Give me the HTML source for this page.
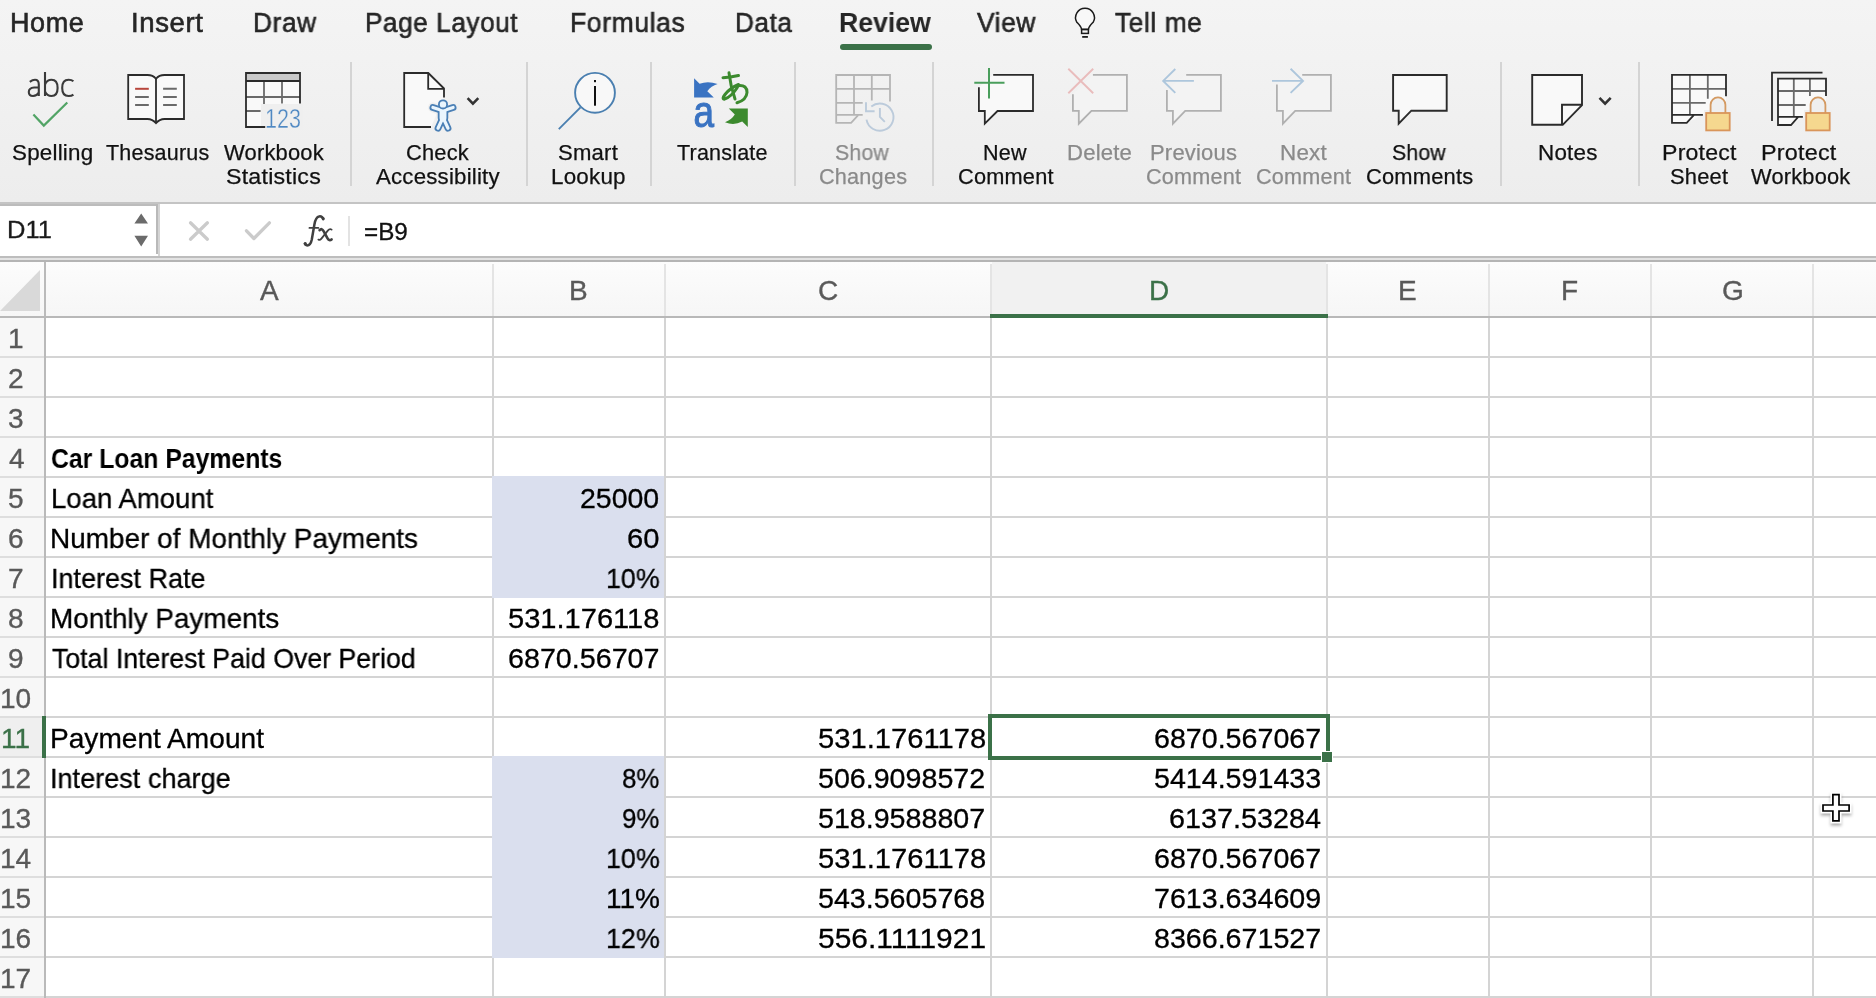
<!DOCTYPE html><html><head><meta charset="utf-8"><style>
*{margin:0;padding:0;box-sizing:border-box}
html,body{width:1876px;height:998px;overflow:hidden;background:#fff;font-family:"Liberation Sans",sans-serif}
.a{position:absolute}
.t{position:absolute;white-space:nowrap;line-height:80px;transform-origin:0 0;will-change:transform}
.tb{-webkit-text-stroke:0.75px #262626}
.tl{-webkit-text-stroke:0.2px currentColor}
.tc{-webkit-text-stroke:0.3px currentColor}
.sep{position:absolute;top:62px;width:2px;height:124px;background:#d4d4d4}
</style></head><body><div class="a" style="left:0;top:0;width:1876px;height:202px;background:linear-gradient(#f4f4f4,#ededed)"></div>
<div class="a" style="left:840px;top:44px;width:92px;height:6px;border-radius:3px;background:#3b7148"></div>
<div class="a" style="left:0;top:202px;width:1876px;height:2px;background:#c4c4c4"></div>
<div class="a" style="left:0;top:204px;width:1876px;height:52px;background:#fff"></div>
<div class="a" style="left:0;top:204px;width:158px;height:1.5px;background:#bcbcbc"></div>
<div class="a" style="left:156px;top:204px;width:2px;height:50px;background:#b9b9b9"></div>
<div class="a" style="left:158px;top:204px;width:2px;height:52px;background:#d4d4d4"></div>
<div class="a" style="left:0;top:256px;width:1876px;height:2px;background:#bdbdbd"></div>
<div class="a" style="left:0;top:258px;width:1876px;height:2px;background:#e3e3e3"></div>
<div class="a" style="left:0;top:260px;width:1876px;height:2px;background:#b4b4b4"></div>
<div class="a" style="left:0;top:262px;width:1876px;height:54px;background:linear-gradient(#fcfcfc,#f6f6f6)"></div>
<div class="a" style="left:0;top:318px;width:44px;height:680px;background:#f7f7f7"></div>
<div class="a" style="left:992px;top:262px;width:334px;height:54px;background:#f1f1f1"></div>
<div class="a" style="left:0;top:718px;width:44px;height:38px;background:#efefef"></div>
<svg class="a" style="left:0;top:262px" width="44" height="54"><polygon points="40,8 40,49 0,49" fill="#d9d9d9"/></svg>
<div class="a" style="left:492px;top:476px;width:174px;height:122px;background:#dadfee"></div>
<div class="a" style="left:492px;top:756px;width:174px;height:202px;background:#dadfee"></div>
<div class="a" style="left:44px;top:262px;width:2px;height:736px;background:#bababa"></div>
<div class="a" style="left:492px;top:264px;width:2px;height:52px;background:#e4e4e4"></div>
<div class="a" style="left:664px;top:264px;width:2px;height:52px;background:#e4e4e4"></div>
<div class="a" style="left:990px;top:264px;width:2px;height:52px;background:#e4e4e4"></div>
<div class="a" style="left:1326px;top:264px;width:2px;height:52px;background:#e4e4e4"></div>
<div class="a" style="left:1488px;top:264px;width:2px;height:52px;background:#e4e4e4"></div>
<div class="a" style="left:1650px;top:264px;width:2px;height:52px;background:#e4e4e4"></div>
<div class="a" style="left:1812px;top:264px;width:2px;height:52px;background:#e4e4e4"></div>
<div class="a" style="left:0;top:356px;width:44px;height:2px;background:#dedede"></div>
<div class="a" style="left:46px;top:356px;width:1830px;height:2px;background:#d4d4d4"></div>
<div class="a" style="left:0;top:396px;width:44px;height:2px;background:#dedede"></div>
<div class="a" style="left:46px;top:396px;width:1830px;height:2px;background:#d4d4d4"></div>
<div class="a" style="left:0;top:436px;width:44px;height:2px;background:#dedede"></div>
<div class="a" style="left:46px;top:436px;width:1830px;height:2px;background:#d4d4d4"></div>
<div class="a" style="left:0;top:476px;width:44px;height:2px;background:#dedede"></div>
<div class="a" style="left:46px;top:476px;width:1830px;height:2px;background:#d4d4d4"></div>
<div class="a" style="left:0;top:516px;width:44px;height:2px;background:#dedede"></div>
<div class="a" style="left:46px;top:516px;width:1830px;height:2px;background:#d4d4d4"></div>
<div class="a" style="left:0;top:556px;width:44px;height:2px;background:#dedede"></div>
<div class="a" style="left:46px;top:556px;width:1830px;height:2px;background:#d4d4d4"></div>
<div class="a" style="left:0;top:596px;width:44px;height:2px;background:#dedede"></div>
<div class="a" style="left:46px;top:596px;width:1830px;height:2px;background:#d4d4d4"></div>
<div class="a" style="left:0;top:636px;width:44px;height:2px;background:#dedede"></div>
<div class="a" style="left:46px;top:636px;width:1830px;height:2px;background:#d4d4d4"></div>
<div class="a" style="left:0;top:676px;width:44px;height:2px;background:#dedede"></div>
<div class="a" style="left:46px;top:676px;width:1830px;height:2px;background:#d4d4d4"></div>
<div class="a" style="left:0;top:716px;width:44px;height:2px;background:#dedede"></div>
<div class="a" style="left:46px;top:716px;width:1830px;height:2px;background:#d4d4d4"></div>
<div class="a" style="left:0;top:756px;width:44px;height:2px;background:#dedede"></div>
<div class="a" style="left:46px;top:756px;width:1830px;height:2px;background:#d4d4d4"></div>
<div class="a" style="left:0;top:796px;width:44px;height:2px;background:#dedede"></div>
<div class="a" style="left:46px;top:796px;width:1830px;height:2px;background:#d4d4d4"></div>
<div class="a" style="left:0;top:836px;width:44px;height:2px;background:#dedede"></div>
<div class="a" style="left:46px;top:836px;width:1830px;height:2px;background:#d4d4d4"></div>
<div class="a" style="left:0;top:876px;width:44px;height:2px;background:#dedede"></div>
<div class="a" style="left:46px;top:876px;width:1830px;height:2px;background:#d4d4d4"></div>
<div class="a" style="left:0;top:916px;width:44px;height:2px;background:#dedede"></div>
<div class="a" style="left:46px;top:916px;width:1830px;height:2px;background:#d4d4d4"></div>
<div class="a" style="left:0;top:956px;width:44px;height:2px;background:#dedede"></div>
<div class="a" style="left:46px;top:956px;width:1830px;height:2px;background:#d4d4d4"></div>
<div class="a" style="left:0;top:996px;width:44px;height:2px;background:#dedede"></div>
<div class="a" style="left:46px;top:996px;width:1830px;height:2px;background:#d4d4d4"></div>
<div class="a" style="left:492px;top:318px;width:2px;height:680px;background:#d4d4d4"></div>
<div class="a" style="left:664px;top:318px;width:2px;height:680px;background:#d4d4d4"></div>
<div class="a" style="left:990px;top:318px;width:2px;height:680px;background:#d4d4d4"></div>
<div class="a" style="left:1326px;top:318px;width:2px;height:680px;background:#d4d4d4"></div>
<div class="a" style="left:1488px;top:318px;width:2px;height:680px;background:#d4d4d4"></div>
<div class="a" style="left:1650px;top:318px;width:2px;height:680px;background:#d4d4d4"></div>
<div class="a" style="left:1812px;top:318px;width:2px;height:680px;background:#d4d4d4"></div>
<div class="a" style="left:492px;top:476px;width:172px;height:122px;background:#dadfee"></div>
<div class="a" style="left:492px;top:756px;width:172px;height:202px;background:#dadfee"></div>
<div class="a" style="left:0;top:316px;width:1876px;height:2px;background:#b8b8b8"></div>
<div class="a" style="left:990px;top:314px;width:338px;height:4px;background:#3b7148"></div>
<div class="a" style="left:42px;top:716px;width:4px;height:42px;background:#3b7148"></div>
<div class="sep" style="left:350px"></div>
<div class="sep" style="left:526px"></div>
<div class="sep" style="left:650px"></div>
<div class="sep" style="left:794px"></div>
<div class="sep" style="left:932px"></div>
<div class="sep" style="left:1500px"></div>
<div class="sep" style="left:1638px"></div>
<div class="t" style="left:9.50px;top:-17.00px;font-size:27px;color:#262626;letter-spacing:0.6px;-webkit-text-stroke:0.6px #262626">Home</div>
<div class="t" style="left:130.96px;top:-17.00px;font-size:27px;color:#262626;transform:scaleX(1.0203);letter-spacing:0.6px;-webkit-text-stroke:0.6px #262626">Insert</div>
<div class="t" style="left:253.45px;top:-17.00px;font-size:27px;color:#262626;transform:scaleX(0.9746);letter-spacing:0.6px;-webkit-text-stroke:0.6px #262626">Draw</div>
<div class="t" style="left:365.46px;top:-17.00px;font-size:27px;color:#262626;transform:scaleX(0.9679);letter-spacing:0.6px;-webkit-text-stroke:0.6px #262626">Page Layout</div>
<div class="t" style="left:569.93px;top:-17.00px;font-size:27px;color:#262626;transform:scaleX(0.9833);letter-spacing:0.6px;-webkit-text-stroke:0.6px #262626">Formulas</div>
<div class="t" style="left:735.36px;top:-17.00px;font-size:27px;color:#262626;transform:scaleX(0.9684);letter-spacing:0.6px;-webkit-text-stroke:0.6px #262626">Data</div>
<div class="t" style="left:977.20px;top:-17.00px;font-size:27px;color:#262626;transform:scaleX(0.9767);letter-spacing:0.6px;-webkit-text-stroke:0.6px #262626">View</div>
<div class="t" style="left:1115.20px;top:-17.00px;font-size:27px;color:#262626;transform:scaleX(0.9750);letter-spacing:0.6px;-webkit-text-stroke:0.6px #262626">Tell me</div>
<div class="t" style="left:839.33px;top:-17.00px;font-size:27px;font-weight:bold;color:#262626;transform:scaleX(0.9868);">Review</div>
<div class="t" style="left:11.76px;top:113.00px;font-size:21.5px;color:#111;transform:scaleX(1.0421);letter-spacing:0.2px;-webkit-text-stroke:0.25px currentColor">Spelling</div>
<div class="t" style="left:106.00px;top:113.00px;font-size:21.5px;color:#111;letter-spacing:0.2px;-webkit-text-stroke:0.25px currentColor">Thesaurus</div>
<div class="t" style="left:223.90px;top:113.00px;font-size:21.5px;color:#111;transform:scaleX(1.0194);letter-spacing:0.2px;-webkit-text-stroke:0.25px currentColor">Workbook</div>
<div class="t" style="left:225.92px;top:136.80px;font-size:21.5px;color:#111;transform:scaleX(1.0791);letter-spacing:0.2px;-webkit-text-stroke:0.25px currentColor">Statistics</div>
<div class="t" style="left:405.98px;top:113.00px;font-size:21.5px;color:#111;transform:scaleX(1.0164);letter-spacing:0.2px;-webkit-text-stroke:0.25px currentColor">Check</div>
<div class="t" style="left:375.80px;top:136.80px;font-size:21.5px;color:#111;transform:scaleX(1.0342);letter-spacing:0.2px;-webkit-text-stroke:0.25px currentColor">Accessibility</div>
<div class="t" style="left:558.17px;top:113.00px;font-size:21.5px;color:#111;transform:scaleX(1.0281);letter-spacing:0.2px;-webkit-text-stroke:0.25px currentColor">Smart</div>
<div class="t" style="left:550.72px;top:136.80px;font-size:21.5px;color:#111;transform:scaleX(1.0420);letter-spacing:0.2px;-webkit-text-stroke:0.25px currentColor">Lookup</div>
<div class="t" style="left:677.20px;top:113.00px;font-size:21.5px;color:#111;letter-spacing:0.2px;-webkit-text-stroke:0.25px currentColor">Translate</div>
<div class="t" style="left:835.31px;top:113.00px;font-size:21.5px;color:#8a8a8a;transform:scaleX(0.9889);letter-spacing:0.2px;-webkit-text-stroke:0.25px currentColor">Show</div>
<div class="t" style="left:818.79px;top:136.80px;font-size:21.5px;color:#8a8a8a;transform:scaleX(1.0081);letter-spacing:0.2px;-webkit-text-stroke:0.25px currentColor">Changes</div>
<div class="t" style="left:983.20px;top:113.00px;font-size:21.5px;color:#111;transform:scaleX(1.0024);letter-spacing:0.2px;-webkit-text-stroke:0.25px currentColor">New</div>
<div class="t" style="left:957.79px;top:136.80px;font-size:21.5px;color:#111;transform:scaleX(1.0117);letter-spacing:0.2px;-webkit-text-stroke:0.25px currentColor">Comment</div>
<div class="t" style="left:1067.04px;top:113.00px;font-size:21.5px;color:#8a8a8a;transform:scaleX(1.0279);letter-spacing:0.2px;-webkit-text-stroke:0.25px currentColor">Delete</div>
<div class="t" style="left:1149.66px;top:113.00px;font-size:21.5px;color:#8a8a8a;transform:scaleX(1.0217);letter-spacing:0.2px;-webkit-text-stroke:0.25px currentColor">Previous</div>
<div class="t" style="left:1146.19px;top:136.80px;font-size:21.5px;color:#8a8a8a;transform:scaleX(1.0064);letter-spacing:0.2px;-webkit-text-stroke:0.25px currentColor">Comment</div>
<div class="t" style="left:1280.22px;top:113.00px;font-size:21.5px;color:#8a8a8a;transform:scaleX(1.0419);letter-spacing:0.2px;-webkit-text-stroke:0.25px currentColor">Next</div>
<div class="t" style="left:1256.29px;top:136.80px;font-size:21.5px;color:#8a8a8a;transform:scaleX(1.0064);letter-spacing:0.2px;-webkit-text-stroke:0.25px currentColor">Comment</div>
<div class="t" style="left:1392.31px;top:113.00px;font-size:21.5px;color:#111;transform:scaleX(0.9870);letter-spacing:0.2px;-webkit-text-stroke:0.25px currentColor">Show</div>
<div class="t" style="left:1365.98px;top:136.80px;font-size:21.5px;color:#111;transform:scaleX(1.0173);letter-spacing:0.2px;-webkit-text-stroke:0.25px currentColor">Comments</div>
<div class="t" style="left:1537.82px;top:113.00px;font-size:21.5px;color:#111;transform:scaleX(1.0418);letter-spacing:0.2px;-webkit-text-stroke:0.25px currentColor">Notes</div>
<div class="t" style="left:1661.65px;top:113.00px;font-size:21.5px;color:#111;transform:scaleX(1.0746);letter-spacing:0.2px;-webkit-text-stroke:0.25px currentColor">Protect</div>
<div class="t" style="left:1670.28px;top:136.80px;font-size:21.5px;color:#111;transform:scaleX(1.0179);letter-spacing:0.2px;-webkit-text-stroke:0.25px currentColor">Sheet</div>
<div class="t" style="left:1760.83px;top:113.00px;font-size:21.5px;color:#111;transform:scaleX(1.0866);letter-spacing:0.2px;-webkit-text-stroke:0.25px currentColor">Protect</div>
<div class="t" style="left:1750.50px;top:136.80px;font-size:21.5px;color:#111;transform:scaleX(1.0143);letter-spacing:0.2px;-webkit-text-stroke:0.25px currentColor">Workbook</div>
<div class="t" style="left:7.47px;top:190.30px;font-size:24px;color:#1a1a1a;transform:scaleX(1.0625);-webkit-text-stroke:0.3px currentColor">D11</div>
<div class="t" style="left:363.59px;top:191.90px;font-size:24px;color:#111;transform:scaleX(1.0095);-webkit-text-stroke:0.3px currentColor">=B9</div>
<div class="t" style="left:259.50px;top:250.90px;font-size:28px;color:#595959;-webkit-text-stroke:0.35px currentColor">A</div>
<div class="t" style="left:569.00px;top:250.90px;font-size:28px;color:#595959;-webkit-text-stroke:0.35px currentColor">B</div>
<div class="t" style="left:818.00px;top:250.90px;font-size:28px;color:#595959;-webkit-text-stroke:0.35px currentColor">C</div>
<div class="t" style="left:1148.50px;top:250.90px;font-size:28px;color:#3b7148;-webkit-text-stroke:0.35px currentColor">D</div>
<div class="t" style="left:1398.00px;top:250.90px;font-size:28px;color:#595959;-webkit-text-stroke:0.35px currentColor">E</div>
<div class="t" style="left:1561.00px;top:250.90px;font-size:28px;color:#595959;-webkit-text-stroke:0.35px currentColor">F</div>
<div class="t" style="left:1721.50px;top:250.90px;font-size:28px;color:#595959;-webkit-text-stroke:0.35px currentColor">G</div>
<div class="t" style="left:7.50px;top:298.80px;font-size:28px;color:#595959;-webkit-text-stroke:0.35px currentColor">1</div>
<div class="t" style="left:8.00px;top:338.80px;font-size:28px;color:#595959;-webkit-text-stroke:0.35px currentColor">2</div>
<div class="t" style="left:8.00px;top:378.80px;font-size:28px;color:#595959;-webkit-text-stroke:0.35px currentColor">3</div>
<div class="t" style="left:8.50px;top:418.80px;font-size:28px;color:#595959;-webkit-text-stroke:0.35px currentColor">4</div>
<div class="t" style="left:8.00px;top:458.80px;font-size:28px;color:#595959;-webkit-text-stroke:0.35px currentColor">5</div>
<div class="t" style="left:8.00px;top:498.80px;font-size:28px;color:#595959;-webkit-text-stroke:0.35px currentColor">6</div>
<div class="t" style="left:8.00px;top:538.80px;font-size:28px;color:#595959;-webkit-text-stroke:0.35px currentColor">7</div>
<div class="t" style="left:8.00px;top:578.80px;font-size:28px;color:#595959;-webkit-text-stroke:0.35px currentColor">8</div>
<div class="t" style="left:8.00px;top:618.80px;font-size:28px;color:#595959;-webkit-text-stroke:0.35px currentColor">9</div>
<div class="t" style="left:0.00px;top:658.80px;font-size:28px;color:#595959;-webkit-text-stroke:0.35px currentColor">10</div>
<div class="t" style="left:1.00px;top:698.80px;font-size:28px;color:#3b7148;-webkit-text-stroke:0.35px currentColor">11</div>
<div class="t" style="left:0.00px;top:738.80px;font-size:28px;color:#595959;-webkit-text-stroke:0.35px currentColor">12</div>
<div class="t" style="left:0.00px;top:778.80px;font-size:28px;color:#595959;-webkit-text-stroke:0.35px currentColor">13</div>
<div class="t" style="left:-0.50px;top:818.80px;font-size:28px;color:#595959;-webkit-text-stroke:0.35px currentColor">14</div>
<div class="t" style="left:0.00px;top:858.80px;font-size:28px;color:#595959;-webkit-text-stroke:0.35px currentColor">15</div>
<div class="t" style="left:0.00px;top:898.80px;font-size:28px;color:#595959;-webkit-text-stroke:0.35px currentColor">16</div>
<div class="t" style="left:0.00px;top:938.80px;font-size:28px;color:#595959;-webkit-text-stroke:0.35px currentColor">17</div>
<div class="t" style="left:50.92px;top:418.90px;font-size:28px;font-weight:bold;color:#000;transform:scaleX(0.8849);">Car Loan Payments</div>
<div class="t" style="left:50.73px;top:458.90px;font-size:28px;color:#000;transform:scaleX(0.9840);-webkit-text-stroke:0.3px currentColor">Loan Amount</div>
<div class="t" style="left:49.80px;top:498.90px;font-size:28px;color:#000;transform:scaleX(0.9978);-webkit-text-stroke:0.3px currentColor">Number of Monthly Payments</div>
<div class="t" style="left:50.57px;top:538.90px;font-size:28px;color:#000;transform:scaleX(0.9637);-webkit-text-stroke:0.3px currentColor">Interest Rate</div>
<div class="t" style="left:49.81px;top:578.90px;font-size:28px;color:#000;transform:scaleX(0.9956);-webkit-text-stroke:0.3px currentColor">Monthly Payments</div>
<div class="t" style="left:51.80px;top:618.90px;font-size:28px;color:#000;transform:scaleX(0.9537);-webkit-text-stroke:0.3px currentColor">Total Interest Paid Over Period</div>
<div class="t" style="left:49.79px;top:698.90px;font-size:28px;color:#000;transform:scaleX(1.0033);-webkit-text-stroke:0.3px currentColor">Payment Amount</div>
<div class="t" style="left:49.87px;top:738.90px;font-size:28px;color:#000;transform:scaleX(0.9674);-webkit-text-stroke:0.3px currentColor">Interest charge</div>
<div class="t" style="left:580.18px;top:458.90px;font-size:28px;color:#000;transform:scaleX(1.0171);-webkit-text-stroke:0.3px currentColor">25000</div>
<div class="t" style="left:627.26px;top:498.90px;font-size:28px;color:#000;transform:scaleX(1.0414);-webkit-text-stroke:0.3px currentColor">60</div>
<div class="t" style="left:605.89px;top:538.90px;font-size:28px;color:#000;transform:scaleX(0.9566);-webkit-text-stroke:0.3px currentColor">10%</div>
<div class="t" style="left:507.96px;top:578.90px;font-size:28px;color:#000;transform:scaleX(1.0382);-webkit-text-stroke:0.3px currentColor">531.176118</div>
<div class="t" style="left:507.98px;top:618.90px;font-size:28px;color:#000;transform:scaleX(1.0240);-webkit-text-stroke:0.3px currentColor">6870.56707</div>
<div class="t" style="left:621.58px;top:738.90px;font-size:28px;color:#000;transform:scaleX(0.9231);-webkit-text-stroke:0.3px currentColor">8%</div>
<div class="t" style="left:621.58px;top:778.90px;font-size:28px;color:#000;transform:scaleX(0.9231);-webkit-text-stroke:0.3px currentColor">9%</div>
<div class="t" style="left:605.78px;top:818.90px;font-size:28px;color:#000;transform:scaleX(0.9585);-webkit-text-stroke:0.3px currentColor">10%</div>
<div class="t" style="left:605.71px;top:858.90px;font-size:28px;color:#000;transform:scaleX(0.9961);-webkit-text-stroke:0.3px currentColor">11%</div>
<div class="t" style="left:605.78px;top:898.90px;font-size:28px;color:#000;transform:scaleX(0.9585);-webkit-text-stroke:0.3px currentColor">12%</div>
<div class="t" style="left:817.56px;top:698.90px;font-size:28px;color:#000;transform:scaleX(1.0415);-webkit-text-stroke:0.3px currentColor">531.1761178</div>
<div class="t" style="left:817.58px;top:738.90px;font-size:28px;color:#000;transform:scaleX(1.0222);-webkit-text-stroke:0.3px currentColor">506.9098572</div>
<div class="t" style="left:817.58px;top:778.90px;font-size:28px;color:#000;transform:scaleX(1.0222);-webkit-text-stroke:0.3px currentColor">518.9588807</div>
<div class="t" style="left:817.56px;top:818.90px;font-size:28px;color:#000;transform:scaleX(1.0415);-webkit-text-stroke:0.3px currentColor">531.1761178</div>
<div class="t" style="left:817.58px;top:858.90px;font-size:28px;color:#000;transform:scaleX(1.0222);-webkit-text-stroke:0.3px currentColor">543.5605768</div>
<div class="t" style="left:817.53px;top:898.90px;font-size:28px;color:#000;transform:scaleX(1.0684);-webkit-text-stroke:0.3px currentColor">556.1111921</div>
<div class="t" style="left:1153.78px;top:698.90px;font-size:28px;color:#000;transform:scaleX(1.0222);-webkit-text-stroke:0.3px currentColor">6870.567067</div>
<div class="t" style="left:1153.78px;top:738.90px;font-size:28px;color:#000;transform:scaleX(1.0222);-webkit-text-stroke:0.3px currentColor">5414.591433</div>
<div class="t" style="left:1169.37px;top:778.90px;font-size:28px;color:#000;transform:scaleX(1.0274);-webkit-text-stroke:0.3px currentColor">6137.53284</div>
<div class="t" style="left:1153.78px;top:818.90px;font-size:28px;color:#000;transform:scaleX(1.0222);-webkit-text-stroke:0.3px currentColor">6870.567067</div>
<div class="t" style="left:1153.78px;top:858.90px;font-size:28px;color:#000;transform:scaleX(1.0222);-webkit-text-stroke:0.3px currentColor">7613.634609</div>
<div class="t" style="left:1153.78px;top:898.90px;font-size:28px;color:#000;transform:scaleX(1.0222);-webkit-text-stroke:0.3px currentColor">8366.671527</div>
<div class="a" style="left:988px;top:714px;width:342px;height:46px;border:4px solid #3b7148"></div>
<div class="a" style="left:1320.7px;top:750.5px;width:12px;height:12px;background:#3b7148;border:1px solid #fff"></div>
<svg class="a" style="left:1800px;top:770px" width="76" height="76" viewBox="1800 770 76 76"><defs><filter id="sh" x="-50%" y="-50%" width="200%" height="200%"><feGaussianBlur stdDeviation="1.6"/></filter></defs><path d="M1832.9 794.6 H1839 V805 H1849.1 V811 H1839 V820.9 H1832.9 V811 H1823 V805 H1832.9 Z" transform="translate(0 2.5)" stroke="#000" stroke-opacity="0.25" stroke-width="5" fill="#000" fill-opacity="0.2" filter="url(#sh)"/><path d="M1832.9 794.6 H1839 V805 H1849.1 V811 H1839 V820.9 H1832.9 V811 H1823 V805 H1832.9 Z" stroke="#fff" stroke-width="5" fill="#fff" stroke-linejoin="miter"/><path d="M1832.9 794.6 H1839 V805 H1849.1 V811 H1839 V820.9 H1832.9 V811 H1823 V805 H1832.9 Z" stroke="#000" stroke-width="1.7" fill="#fff"/></svg><svg class="a" style="left:0;top:0" width="1876" height="262" viewBox="0 0 1876 262" fill="none" stroke-linejoin="miter">
<!-- bulb -->
<g stroke="#1a1a1a" stroke-width="1.5">
<path d="M1081.6 29.3 C1081.2 26.5 1078.5 24 1076.8 22.2 A9.4 9.4 0 1 1 1093.2 22.2 C1091.5 24 1088.8 26.5 1088.4 29.3 Z" fill="#f8f8f8"/>
<rect x="1081.6" y="29.6" width="6.8" height="3.8"/>
</g>
<rect x="1082.2" y="36" width="5.7" height="1.8" fill="#1a1a1a"/>
<!-- spelling abc -->
<g stroke="#3a3a3a" stroke-width="2.1" stroke-linecap="butt">
<path d="M29.8 81.8 Q32.5 79.8 35 79.8 Q38.8 79.8 38.8 84.5 L38.8 96 M38.8 87.2 L34.2 87.5 Q28.8 88 28.8 92 Q28.8 96 33 96 Q36.8 96 38.8 92.5"/>
<path d="M45 72 L45 96 M45 84.5 Q47 79.8 51.5 79.8 Q57.6 79.8 57.6 87.9 Q57.6 96 51.5 96 Q47 96 45 91.5"/>
<path d="M73.4 81.3 Q71.6 79.8 68.6 79.8 Q62.2 79.8 62.2 87.9 Q62.2 96 68.6 96 Q71.6 96 73.4 94.6"/>
</g>
<path d="M33.4 114.4 L43.8 125.6 L67.3 102.5" stroke="#52a466" stroke-width="2.2"/>
<!-- thesaurus book -->
<g stroke="#2b2b2b" stroke-width="1.8">
<path d="M128.2 75 L147.5 75 Q153 75 156 78.8 Q159 75 164.5 75 L184 75 L184 119 L164.5 119 Q159.5 119 156 123.2 Q152.5 119 147.5 119 L128.2 119 Z" fill="#f9f9f9"/>
<path d="M156 78.8 L156 123"/>
</g>
<path d="M135.1 88.8 H148.8" stroke="#b8473d" stroke-width="2"/>
<path d="M135.1 96.9 H148.8 M135.1 105 H148.8 M163.1 88.8 H176.8 M163.1 96.9 H176.8 M163.1 105 H176.8" stroke="#6a6a6a" stroke-width="2"/>
<!-- workbook statistics -->
<rect x="246" y="73" width="54" height="54" fill="#f9f9f9"/>
<rect x="246.9" y="73.9" width="52.2" height="6.6" fill="#c9c9c9"/>
<g stroke="#6a6a6a" stroke-width="1.8">
<path d="M264 81 V107 M282 81 V103.6 M246 97 H300 M246 111 H260.6"/>
</g>
<rect x="261" y="104" width="42" height="26" fill="#efefef"/>
<g stroke="#2b2b2b" stroke-width="1.8">
<path d="M300 103.6 V73 H246 V127 H265.2 M246 81 H300"/>
</g>
<text x="265" y="127.6" font-family="Liberation Sans" font-size="27.5" fill="#4f88c2" stroke="#f2f2f2" stroke-width="0.35" textLength="36" lengthAdjust="spacingAndGlyphs">123</text>
<!-- check accessibility -->
<g stroke="#2b2b2b" stroke-width="1.8">
<path d="M431 127 H404.2 V73 H428.3 L444 88.5 V97.6" fill="#f9f9f9"/>
<path d="M428.2 73 V88.8 H444"/>
</g>
<g stroke-linecap="round" stroke-linejoin="round">
<path d="M432.9 107.5 L443 110.8 L453.1 107.5 M443 111 V117 M443 117.5 L438 128.2 M443 117.5 L448 128.2" stroke="#efefef" stroke-width="10"/>
<path d="M443 111 V117" stroke="#efefef" stroke-width="14"/>
<path d="M432.9 107.5 L443 110.8 L453.1 107.5 M443 117.5 L438 128.2 M443 117.5 L448 128.2" stroke="#4a7fb5" stroke-width="6.8"/>
<path d="M443 111 V118" stroke="#4a7fb5" stroke-width="10.5"/>
<path d="M432.9 107.5 L443 110.8 L453.1 107.5 M443 117.5 L438 128.2 M443 117.5 L448 128.2" stroke="#eaf5fd" stroke-width="3.2"/>
<path d="M443 111.5 V118" stroke="#eaf5fd" stroke-width="6.9"/>
</g>
<circle cx="443" cy="104.4" r="4.1" stroke="#4a7fb5" stroke-width="1.8" fill="#eaf5fd"/>
<path d="M467.6 98.2 L472.9 103.6 L478.3 98.2" stroke="#333" stroke-width="2.6"/>
<!-- smart lookup -->
<circle cx="595" cy="92.8" r="19.9" stroke="#4a7fb0" stroke-width="1.9" fill="#f8f8f8"/>
<path d="M580.5 107.4 L558.8 129.2" stroke="#4a7fb0" stroke-width="1.9"/>
<rect x="594" y="80" width="2" height="2.2" fill="#111"/>
<rect x="594" y="86" width="2" height="19.7" fill="#111"/>
<!-- translate -->
<path d="M694.1 78.3 L694.1 97.6 L713.8 97.6 L707.3 91.2 Q711 86 717.6 84 Q708 80.5 699.6 83.7 Z" fill="#3a73c2"/>
<path d="M728.8 108.5 L747.8 108.5 L747.8 127.1 L742.2 121.5 Q734 126 725 122.3 Q731.5 120 734.8 114.6 Z" fill="#3c8a2e"/>
<text x="693.5" y="127.2" font-family="Liberation Sans" font-size="45" fill="#3a73c2" stroke="#3a73c2" stroke-width="1.1" textLength="20.5" lengthAdjust="spacingAndGlyphs">a</text>
<g stroke="#3c8a2e" stroke-width="3" stroke-linecap="round" fill="none">
<path d="M723 77.8 Q730 77.5 738.5 75.5"/>
<path d="M729 72.8 Q730.5 86 735 99"/>
<path d="M738.5 84.5 Q730 88 725 94.5 Q721.5 99 724.5 99.2 Q731 97 737 88 Q737.5 86 739 85.5 Q747 85 747 92.5 Q746.5 100 737 102.8"/>
</g>
<!-- show changes (disabled) -->
<g stroke="#b5b5b5" stroke-width="1.8">
<path d="M890 101.5 V75 H836.2 V122.9 H851.1 L858.2 115.1"/>
<path d="M854 75 V114 M871.8 75 V100.4 M836.2 88.8 H890 M836.2 102.9 H862.7 M836.2 114.8 H862.7"/>
</g>
<g stroke="#bccbdb" stroke-width="1.9">
<path d="M866.5 119.6 A13.6 13.6 0 1 0 871.3 106.6"/>
<path d="M866 102.3 V111.2 H874.6"/>
<path d="M879.9 108.1 V116.9 L884.8 121.8"/>
</g>
<!-- new comment -->
<path d="M993.2 74.8 H1033 V111 H997.5 L984.8 123.7 V111 H978.9 V87.2" stroke="#2b2b2b" stroke-width="1.8" fill="#f9f9f9"/>
<path d="M989 68 V98.5 M974.3 82.8 H1004.5" stroke="#4a9e5c" stroke-width="2"/>
<!-- delete -->
<path d="M1092.9 74.8 H1126.9 V110.9 H1091.5 L1078.8 123.7 V110.9 H1072.9 V94.3" stroke="#b0b0b0" stroke-width="1.8" fill="#f3f3f3"/>
<path d="M1068.3 68.7 L1093.2 93.2 M1093.2 68.7 L1068.3 93.2" stroke="#e9bcbc" stroke-width="1.9"/>
<!-- previous -->
<path d="M1186.2 74.8 H1220.9 V110.9 H1185.2 L1172.9 123.7 V110.9 H1166.9 V90" stroke="#b0b0b0" stroke-width="1.8" fill="#f3f3f3"/>
<path d="M1162.9 80.9 H1193.9 M1175.3 69 L1163.2 80.9 L1175.3 92.9" stroke="#adc6dc" stroke-width="1.9"/>
<!-- next -->
<path d="M1302.2 74.8 H1330.9 V110.9 H1295.2 L1282.9 123.7 V110.9 H1276.9 V84.4" stroke="#b0b0b0" stroke-width="1.8" fill="#f3f3f3"/>
<path d="M1272 80.9 H1303.2 M1290.6 68.7 L1303 80.9 L1290.6 92.9" stroke="#adc6dc" stroke-width="1.9"/>
<!-- show comments -->
<path d="M1393.1 75 H1446.7 V110.7 H1411.3 L1398.7 123.7 V110.7 H1393.1 Z" stroke="#2b2b2b" stroke-width="1.9" fill="#f9f9f9"/>
<!-- notes -->
<path d="M1532.2 75 H1582 V105.1 L1562.7 124.8 H1532.2 Z" stroke="#2b2b2b" stroke-width="1.9" fill="#f9f9f9"/>
<path d="M1562 124.8 V104.8 H1582" stroke="#2b2b2b" stroke-width="1.9"/>
<path d="M1599.5 97.9 L1605.1 103.6 L1610.7 97.9" stroke="#333" stroke-width="2.6"/>
<!-- protect sheet -->
<path d="M1672 74.8 H1726 V114.8 H1702.9 L1686.7 122.9 H1672 Z" fill="#f9f9f9"/>
<g stroke="#6a6a6a" stroke-width="1.8"><path d="M1689.9 74.8 V114.1 M1707.8 74.8 V98.7 M1672 88.8 H1726 M1672 102.9 H1705.7"/></g>
<g stroke="#2b2b2b" stroke-width="1.8"><path d="M1726 96.2 V74.8 H1672 V122.9 H1686.7 L1693.8 115.1 M1672 114.8 H1702.9"/></g>
<!-- protect workbook -->
<path d="M1778 78.7 H1826 V116.9 H1802.9 L1791 125 H1778 Z" fill="#f9f9f9"/>
<g stroke="#6a6a6a" stroke-width="1.8"><path d="M1793.8 78.7 V116.2 M1809.9 78.7 V95.9 M1778 91 H1826 M1778 105 H1805.7"/></g>
<g stroke="#2b2b2b" stroke-width="1.8"><path d="M1772 121.1 V72.7 H1822.5 M1826 95.9 V78.7 H1778 V125 H1791 L1798 117.2 M1778 116.9 H1802.9"/></g>
<!-- locks -->
<g id="lk">
<path d="M1704 132.5 V110 H1710 V104.5 A8 8 0 0 1 1726 104.5 V110 H1732 V132.5 Z" fill="#efefef"/>
<path d="M1710.6 113 V104.8 A7.4 7.4 0 0 1 1725.4 104.8 V113" stroke="#d49a62" stroke-width="1.8"/>
<rect x="1706.2" y="113" width="23.5" height="17.4" fill="#f5d88f" stroke="#d9955a" stroke-width="1.8"/>
</g>
<use href="#lk" x="100" y="0"/>
<!-- formula bar icons -->
<path d="M134.4 223.6 L141.2 213.6 L148 223.6 Z M134.4 235.8 L141.2 246.4 L148 235.8 Z" fill="#6b6b6b"/>
<path d="M190.5 222.8 L207.4 239.2 M207.4 222.8 L190.5 239.2" stroke="#cbcbcb" stroke-width="3.3" stroke-linecap="round"/>
<path d="M246.5 230.8 L253.9 238.5 L269.4 222.8" stroke="#cbcbcb" stroke-width="3.3" stroke-linecap="round" stroke-linejoin="round"/>
<g stroke="#404040" fill="none" stroke-linecap="round">
<path d="M323.2 219.2 Q322.2 216 319.2 216.4 Q315.6 217 314.4 224.5 L311.8 239.5 Q310.6 245.4 307.2 245.4 Q305.2 245.4 304.8 243.6" stroke-width="2.5"/>
<path d="M309.4 227.9 H318.4" stroke-width="1.7"/>
<path d="M319.6 230.2 Q321.8 227.6 323.6 231.2 L327.4 238.2 Q329.2 241.4 331.6 239.4" stroke-width="2.6"/>
<path d="M331.6 229.6 Q329.8 228.2 327.8 230.6 L321.4 238.6 Q319.8 240.6 318.4 239.6" stroke-width="1.8"/>
</g>
<circle cx="323.2" cy="218.6" r="1.5" fill="#404040"/>
<circle cx="305.3" cy="243.4" r="1.5" fill="#404040"/>
<rect x="348.2" y="216" width="1.6" height="30" fill="#dcdcdc"/>
</svg>
</body></html>
